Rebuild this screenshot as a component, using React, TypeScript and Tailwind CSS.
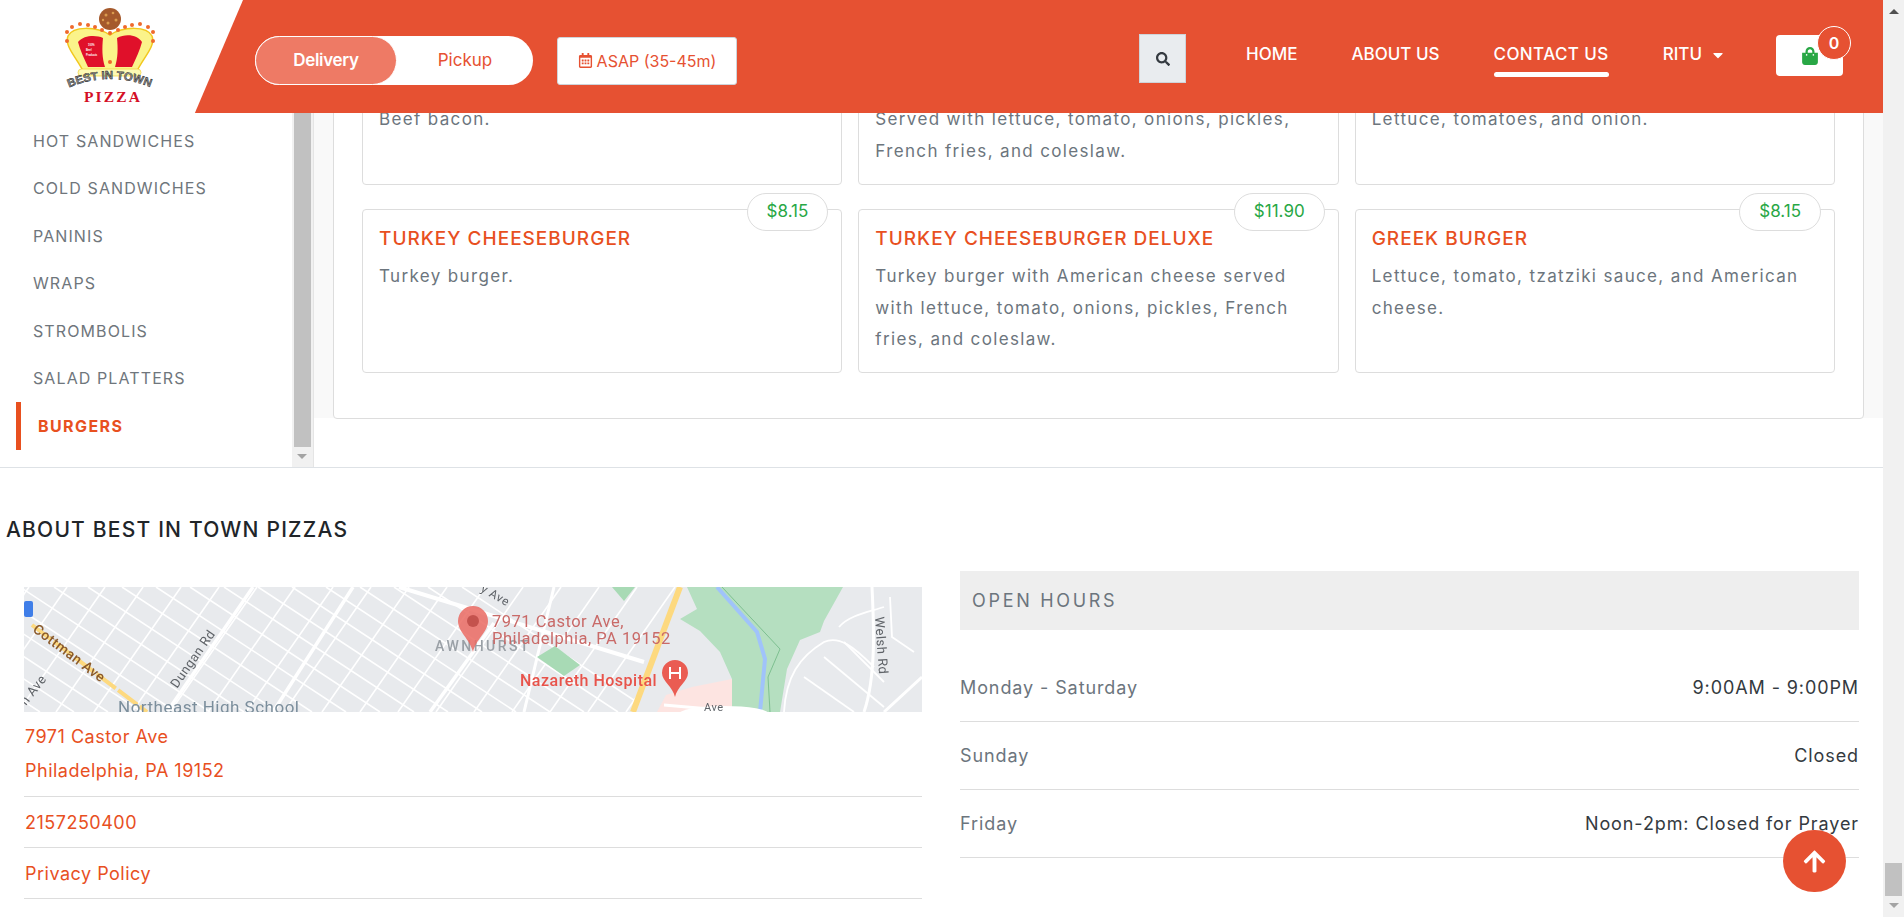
import { FaArrowUp, FaCaretDown, FaRegCalendarAlt, FaSearch, FaShoppingBag } from 'react-icons/fa';

const categories = ['HOT SANDWICHES', 'COLD SANDWICHES', 'PANINIS', 'WRAPS', 'STROMBOLIS', 'SALAD PLATTERS'];

const topRow = [
    ['Beef bacon.'],
    ['Served with lettuce, tomato, onions, pickles,', 'French fries, and coleslaw.'],
    ['Lettuce, tomatoes, and onion.'],
];

const burgers = [
    { name: 'TURKEY CHEESEBURGER', price: '$8.15', lines: ['Turkey burger.'] },
    {
        name: 'TURKEY CHEESEBURGER DELUXE',
        price: '$11.90',
        lines: ['Turkey burger with American cheese served', 'with lettuce, tomato, onions, pickles, French', 'fries, and coleslaw.'],
    },
    { name: 'GREEK BURGER', price: '$8.15', lines: ['Lettuce, tomato, tzatziki sauce, and American', 'cheese.'] },
];

const hours = [
    ['Monday - Saturday', '9:00AM - 9:00PM'],
    ['Sunday', 'Closed'],
    ['Friday', 'Noon-2pm: Closed for Prayer'],
];

const beads = [
    [17, 41], [17, 32], [22, 27], [30, 24], [38, 25], [45, 27], [52, 30], [60, 33],
    [68, 30], [75, 27], [82, 25], [90, 24], [98, 27], [103, 32], [103, 41],
];

const Logo = () => (
    <svg width="120" height="115" viewBox="0 0 120 115">
        <circle cx="60" cy="19" r="11" fill="#a5592c" />
        <circle cx="56" cy="15" r="1.5" fill="#d99a4e" />
        <circle cx="63" cy="13" r="1.3" fill="#d99a4e" />
        <circle cx="66" cy="20" r="1.5" fill="#d99a4e" />
        <circle cx="58" cy="23" r="1.5" fill="#d99a4e" />
        <circle cx="53" cy="20" r="1.2" fill="#d99a4e" />
        <path d="M33 71C27 58 14 46 18 36C23 26 46 26 60 35C74 26 97 26 102 36C106 46 93 58 87 71Z" fill="#fbf38a" stroke="#f2c81f" strokeWidth="1.5" />
        <path d="M28 42C34 35 46 35 53 38C52 48 52 58 55 67H38C34 58 30 50 28 42Z" fill="#e0102a" />
        <path d="M92 42C88 35 76 33 67 38C68 48 68 58 65 67H82C86 58 90 50 92 42Z" fill="#e0102a" />
        <text x="38" y="46" fontSize="2.6" fontWeight="700" fill="#fff" fontFamily="Liberation Sans, sans-serif">100%</text>
        <text x="36" y="51" fontSize="2.6" fontWeight="700" fill="#fff" fontFamily="Liberation Sans, sans-serif">Beef</text>
        <text x="36" y="56" fontSize="2.6" fontWeight="700" fill="#fff" fontFamily="Liberation Sans, sans-serif">Products</text>
        <rect x="28" y="69" width="63" height="7" rx="3.5" fill="#fdf9b4" stroke="#f2d23a" strokeWidth="0.7" />
        <circle cx="60" cy="62" r="2" fill="#ef6a2c" />
        {beads.map(([cx, cy]) => (
            <circle key={`${cx}-${cy}`} cx={cx} cy={cy} r="2" fill="#ef6a2c" />
        ))}
        <path id="logo-arc" d="M18 88Q60 70 102 88" fill="none" />
        <text fontSize="11.5" fontWeight="700" fill="#8f8f8f" stroke="#111" strokeWidth="0.45" fontFamily="Liberation Sans, sans-serif">
            <textPath href="#logo-arc" startOffset="1">BEST IN TOWN</textPath>
        </text>
        <text x="34" y="102" fontSize="15.5" fontWeight="700" fill="#d40f26" textLength="56" fontFamily="Liberation Serif, serif">PIZZA</text>
    </svg>
);

const MapPicture = () => {
    const steep = Array.from({ length: 24 }, (_, i) => i * 38 - 120);
    const shallow = Array.from({ length: 28 }, (_, i) => i * 34 - 480);

    return (
        <svg width="898" height="125" viewBox="0 0 898 125" className="block blur-[0.4px]">
            <defs>
                <clipPath id="city">
                    <polygon points="0,0 656,0 609,125 0,125" />
                </clipPath>
            </defs>
            <rect width="898" height="125" fill="#e8eaed" />
            <g clipPath="url(#city)" stroke="#fff" strokeWidth="1.6" fill="none">
                {steep.map((x) => (
                    <line key={x} x1={x} y1="125" x2={x + 87} y2="0" />
                ))}
                {shallow.map((x) => (
                    <line key={x} x1={x} y1="0" x2={x + 190} y2="125" />
                ))}
                <line x1="143" y1="125" x2="229" y2="0" strokeWidth="3.5" />
                <line x1="249" y1="125" x2="329" y2="0" strokeWidth="3.5" />
                <line x1="406" y1="125" x2="470" y2="36" strokeWidth="3.5" />
                <line x1="375" y1="0" x2="620" y2="75" strokeWidth="4" />
                <line x1="500" y1="125" x2="530" y2="0" strokeWidth="3" />
            </g>
            <polygon points="513,70 531,59 556,78 540,89" fill="#a8dab5" />
            <polygon points="588,0 611,0 600,14" fill="#a8dab5" />
            <polygon points="633,125 642,108 668,100 708,92 708,125" fill="#fde4e1" />
            <polygon points="663,0 819,0 800,34 796,45 776,53 763,82 756,125 708,125 708,92 696,65 676,44 656,32 673,22" fill="#b5dfc0" />
            <path d="M693 0L733 45L741 72L736 125" fill="none" stroke="#a0c3fa" strokeWidth="4" />
            <path d="M698 0L756 62L744 90L746 125" fill="none" stroke="#6fb884" strokeWidth="0.8" />
            <path d="M656 0L609 125" stroke="#fdd97f" strokeWidth="6" />
            <path d="M8 38L123 125" stroke="#fdd97f" strokeWidth="4" strokeDasharray="24 3" />
            <g fill="none" stroke="#fff" strokeWidth="1.8">
                <path d="M760 125C762 90 775 70 800 55C815 48 830 60 850 80" />
                <path d="M815 40C825 28 845 25 860 20" />
                <path d="M780 90L830 125" />
                <path d="M800 70L860 120" />
                <path d="M820 55L860 95" />
                <path d="M848 0C850 40 852 90 840 125" strokeWidth="3" />
                <path d="M866 10L868 50L890 65" />
                <path d="M860 125L898 90" strokeWidth="3" />
                <path d="M640 118L720 125" strokeWidth="3" />
            </g>
            <ellipse cx="700" cy="127" rx="45" ry="8" fill="#fff" />
            <rect x="0" y="14" width="9" height="16" rx="2" fill="#3f7ee8" />
            <g fontFamily="Roboto, sans-serif">
                <text x="8" y="44" fontSize="14" fontWeight="500" fill="#8a5a2b" transform="rotate(37 8 44)">Cottman Ave</text>
                <text x="153" y="102" fontSize="13" fill="#5f6368" transform="rotate(-55 153 102)">Dungan Rd</text>
                <text x="2" y="119" fontSize="13" fill="#5f6368" transform="rotate(-52 2 119)">n Ave</text>
                <text x="94" y="126" fontSize="17" fill="#7b8e9c">Northeast High School</text>
                <text x="411" y="64" fontSize="14" fontWeight="500" letterSpacing="2.5" fill="#9aa0a6">AWNHURST</text>
                <text x="456" y="4" fontSize="12" fill="#5f6368" transform="rotate(30 456 4)">y Ave</text>
                <text x="680" y="124" fontSize="11" fill="#5f6368">Ave</text>
                <text x="851" y="30" fontSize="13" fill="#5f6368" transform="rotate(86 851 30)">Welsh Rd</text>
                <text x="468" y="40" fontSize="16.5" fill="#c96a68">7971 Castor Ave,</text>
                <text x="468" y="57" fontSize="16.5" fill="#c96a68">Philadelphia, PA 19152</text>
                <text x="496" y="99" fontSize="16" fontWeight="500" fill="#e8534a">Nazareth Hospital</text>
            </g>
            <path d="M449 65C446 52 434 45 434 34A15 15 0 0 1 464 34C464 45 452 52 449 65Z" fill="#ea6a62" fillOpacity="0.85" />
            <circle cx="449" cy="34" r="6" fill="#b3403c" fillOpacity="0.7" />
            <path d="M651 110C649 100 638 94 638 86A13 13 0 0 1 664 86C664 94 653 100 651 110Z" fill="#ea5c52" />
            <path d="M646 80V92M656 80V92M646 86H656" stroke="#fff" strokeWidth="2" fill="none" />
        </svg>
    );
};

const Header = () => (
    <header className="relative z-10 flex h-[113px] items-center bg-[#e65132] text-white">
        <div className="flex h-full w-[243px] shrink-0 bg-white pl-[50px] [clip-path:polygon(0_0,100%_0,80.2%_100%,0_100%)]">
            <Logo />
        </div>
        <div className="ml-3 mt-[8px] flex h-[49px] w-[278px] rounded-full bg-white text-[17px]">
            <button className="h-full w-[142px] rounded-full border border-white bg-[#ee7a65] font-semibold tracking-[-0.3px] text-white">Delivery</button>
            <button className="flex-1 text-[#e65132]">Pickup</button>
        </div>
        <button className="ml-6 mt-[8px] flex h-[48px] w-[180px] items-center justify-center gap-1 rounded-[3px] border border-[#ced4da] bg-white text-[16px] text-[#e65132]">
            <FaRegCalendarAlt className="text-[15px]" />
            ASAP (35-45m)
        </button>
        <button className="ml-auto mt-[4px] flex h-[49px] w-[47px] items-center justify-center border border-[#ced4da] bg-[#e9ecef] text-[14px] text-[#343a40]">
            <FaSearch />
        </button>
        <nav className="mb-[4px] ml-[60px] flex items-center gap-[54px] text-[17px] font-medium">
            <a>HOME</a>
            <a>ABOUT US</a>
            <a className="relative tracking-[0.4px]">
                CONTACT US
                <span className="absolute inset-x-0 top-[30px] h-[5px] rounded-full bg-white" />
            </a>
            <a className="flex items-center gap-2">
                RITU
                <FaCaretDown className="text-[16px]" />
            </a>
        </nav>
        <div className="relative ml-[50px] mr-10 flex h-[41px] w-[67px] -translate-y-[1px] items-center rounded-[4px] bg-white pl-[25px] text-[18px] text-[#28a745]">
            <FaShoppingBag />
            <span className="absolute left-[41px] top-[-9px] flex h-[34px] w-[34px] items-center justify-center rounded-full border border-white bg-[#e65132] text-[16px] font-semibold text-white">0</span>
        </div>
    </header>
);

const Sidebar = () => (
    <aside className="flex w-[314px] shrink-0 border-r border-[#e5e5e5]">
        <ul className="flex-1 pl-4 pt-[4px] text-[16px] tracking-[1.1px] text-[#6f767c]">
            {categories.map((name) => (
                <li key={name} className="flex h-[47.5px] items-center pl-[17px]">{name}</li>
            ))}
            <li className="flex h-[48px] items-center border-l-[5px] border-[#e8501f] pl-[17px] font-bold tracking-[1.4px] text-[#e8501f]">BURGERS</li>
        </ul>
        <div className="flex w-[21px] flex-col bg-[#f1f1f1]">
            <div className="ml-[2px] h-[334px] w-[17px] bg-[#c1c1c1]" />
            <div className="ml-[5px] mt-[7px] h-0 w-0 border-x-[5px] border-t-[5px] border-x-transparent border-t-[#a3a3a3]" />
        </div>
    </aside>
);

const Card = ({ lines }: { lines: string[] }) => (
    <div className="h-[134px] rounded-[4px] border border-[#dddddd] bg-white px-4 pt-[52px] text-[17px] leading-[31.5px] tracking-[1.35px] text-[#6c757d]">
        {lines.map((line) => (
            <div key={line} className="whitespace-nowrap">{line}</div>
        ))}
    </div>
);

const BurgerCard = ({ name, price, lines }: { name: string; price: string; lines: string[] }) => (
    <div className="relative h-[164px] rounded-[4px] border border-[#dddddd] bg-white px-4 pt-[15px] text-[17px] leading-[31.5px] tracking-[1.35px] text-[#6c757d]">
        <div className="absolute right-[13px] top-[-17px] flex h-[38px] items-center rounded-full border border-[#dddddd] bg-white px-[19px] text-[17px] tracking-normal text-[#28a745]">{price}</div>
        <h3 className="mb-2 text-[19px] font-medium leading-[28px] tracking-[1px] text-[#e8501f]">{name}</h3>
        {lines.map((line) => (
            <div key={line} className="whitespace-nowrap">{line}</div>
        ))}
    </div>
);

const Menu = () => (
    <main className="h-[305px] flex-1 bg-[#f9f9f9] px-[19px]">
        <div className="-mt-[80px] rounded-[4px] border border-[#dddddd] bg-white px-7 pb-[45px] pt-[17px]">
            <div className="grid grid-cols-3 gap-x-4 gap-y-[24px]">
                {topRow.map((lines) => (
                    <Card key={lines[0]} lines={lines} />
                ))}
                {burgers.map((item) => (
                    <BurgerCard key={item.name} {...item} />
                ))}
            </div>
        </div>
    </main>
);

const About = () => (
    <section className="pt-[47px]">
        <h2 className="pl-[6px] text-[21px] font-medium leading-[30px] tracking-[1.2px] text-[#212529]">ABOUT BEST IN TOWN PIZZAS</h2>
        <div className="mt-[26px] flex gap-[38px] px-6">
            <div className="mt-4 w-[898px] shrink-0 text-[18px] tracking-[0.5px] text-[#e8501f]">
                <MapPicture />
                <div className="border-b border-[#dddddd] pb-[8px] pl-px pt-[8px] leading-[34px]">
                    <div>7971 Castor Ave</div>
                    <div>Philadelphia, PA 19152</div>
                </div>
                <div className="flex h-[51px] items-center border-b border-[#dddddd] pl-px">2157250400</div>
                <div className="flex h-[51px] items-center border-b border-[#dddddd] pl-px">Privacy Policy</div>
            </div>
            <div className="flex-1">
                <div className="flex h-[59px] items-center bg-[#eeeeee] pl-3 text-[18px] tracking-[2.7px] text-[#6c757d]">OPEN HOURS</div>
                <div className="mt-6 text-[18px] tracking-[0.9px]">
                    {hours.map(([day, time]) => (
                        <div key={day} className="flex h-[68px] items-center justify-between border-b border-[#dddddd]">
                            <span className="text-[#6c757d]">{day}</span>
                            <span className="text-[#343a40]">{time}</span>
                        </div>
                    ))}
                </div>
            </div>
        </div>
    </section>
);

const PageScrollbar = () => (
    <div className="flex w-[21px] shrink-0 flex-col items-center bg-[#f1f1f1]">
        <div className="mt-[9px] h-0 w-0 border-x-[5px] border-b-[5px] border-x-transparent border-b-[#505050]" />
        <div className="mt-auto h-[33px] w-[17px] bg-[#c1c1c1]" />
        <div className="mb-[9px] mt-[7px] h-0 w-0 border-x-[5px] border-t-[5px] border-x-transparent border-t-[#a3a3a3]" />
    </div>
);

export default function App() {
    return (
        <div className="flex h-screen overflow-hidden bg-white font-['Inter','Open_Sans',sans-serif]">
            <div className="relative min-w-0 flex-1">
                <Header />
                <div className="flex h-[355px] border-b border-[#dee2e6]">
                    <Sidebar />
                    <Menu />
                </div>
                <About />
                <button className="absolute bottom-[25px] right-[37px] flex h-[62px] w-[63px] items-center justify-center rounded-full bg-[#e65132] text-[25px] text-white">
                    <FaArrowUp />
                </button>
            </div>
            <PageScrollbar />
        </div>
    );
}
